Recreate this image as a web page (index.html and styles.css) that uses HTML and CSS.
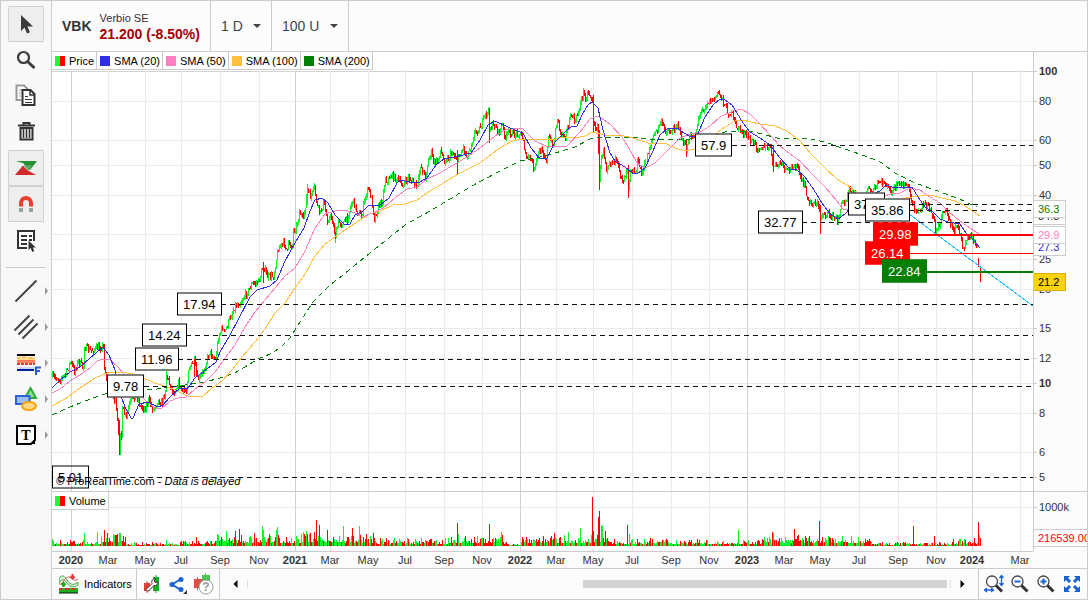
FILE: index.html
```html
<!DOCTYPE html>
<html lang="en">
<head>
    <meta charset="UTF-8">
    <meta name="viewport" content="width=device-width, initial-scale=1.0">
    <title>VBK - Verbio SE</title>
    <link rel="stylesheet" href="styles.css">
</head>
<body>
    <div class="app">
        <nav class="sidebar" aria-label="Drawing tools">
            <button type="button" class="tool active" aria-label="Pointer">
                <svg width="22" height="22" viewBox="0 0 22 22"><path d="M6 2v16l3.500-3.500 2.500 6 3-1.300-2.600-5.700H18z" fill="#3c3c3c"/></svg>
            </button>
            <button type="button" class="tool" aria-label="Zoom">
                <svg width="22" height="22" viewBox="0 0 22 22"><circle cx="8.500" cy="8.500" r="5.500" fill="none" stroke="#3c3c3c" stroke-width="2.200"/><path d="M12.500 12.500l7 6.500" stroke="#3c3c3c" stroke-width="3"/></svg>
            </button>
            <button type="button" class="tool" aria-label="Copy">
                <svg width="22" height="22" viewBox="0 0 22 22"><path d="M6 15H1.500V.5H9l4 4" fill="#fff" stroke="#999" stroke-width="2"/><path d="M4 5h3M4 8h2M4 11h2" stroke="#999"/><path d="M7.500 5h8l4 4v11h-12z" fill="#fff" stroke="#333" stroke-width="2"/><path d="M15 5v5h5" fill="none" stroke="#333" stroke-width="1.500"/><path d="M10 11.500h3M10 14.500h7M10 17.500h7" stroke="#333"/></svg>
            </button>
            <button type="button" class="tool" aria-label="Delete">
                <svg width="22" height="22" viewBox="0 0 22 22"><path d="M3 4.500h17M8.500 4V2h6v2" fill="none" stroke="#333" stroke-width="2"/><path d="M5.500 7v11.500h12V7z" fill="#eee" stroke="#333" stroke-width="2"/><path d="M8.500 8v9M11.500 8v9M14.500 8v9" stroke="#333" stroke-width="1.500"/></svg>
            </button>
            <button type="button" class="tool active" aria-label="Order">
                <svg width="24" height="22" viewBox="0 0 24 22"><path d="M2 4h21l-7 9-5-3.500-1-3z" fill="#269034"/><path d="M1 18l8-9.500 4 4.500 9 5z" fill="#d22a2a"/><path d="M10 8l4 6 4-5.500z" fill="#5fae62"/></svg>
            </button>
            <button type="button" class="tool active" aria-label="Magnet">
                <svg width="22" height="22" viewBox="0 0 22 22"><path d="M6 13.500V10a5 5 0 0 1 10 0v3.500" fill="none" stroke="#e8402f" stroke-width="4"/><path d="M4 15h4v4H4zM14 15h4v4h-4z" fill="#95a5a6"/></svg>
            </button>
            <button type="button" class="tool" aria-label="Object list">
                <svg width="22" height="24" viewBox="0 0 22 24"><path d="M12 20H3V3h16v10" fill="#fff" stroke="#333" stroke-width="2"/><path d="M6 8h6M6 12h6M6 16h6M14 8h3M14 12h3" stroke="#333" stroke-width="2"/><path d="M13.500 12.500v9.500l2.200-2 1.600 4 2-1-1.500-3.500h3z" fill="#333"/></svg>
            </button>
            <hr class="divider">
            <button type="button" class="tool more" aria-label="Line">
                <svg width="24" height="24" viewBox="0 0 24 24"><path d="M1.500 22.500l21-21" stroke="#444" stroke-width="2"/></svg>
            </button>
            <button type="button" class="tool more" aria-label="Parallel lines">
                <svg width="24" height="24" viewBox="0 0 24 24"><path d="M.5 15.500l15-15M4.500 19.500l15-15M8.500 23.500l15-15" stroke="#444" stroke-width="2"/></svg>
            </button>
            <button type="button" class="tool more" aria-label="Fibonacci">
                <svg width="26" height="22" viewBox="0 0 26 22"><path d="M4 3h18" stroke="#000" stroke-width="2"/><path d="M4 5h18v3H4z" fill="#ffd98c"/><path d="M4 6h3M9 5h4M15 6h5" stroke="#ff9d2e"/><path d="M4 8h18v3H4z" fill="#ff8058"/><path d="M4 12h18" stroke="#e33" stroke-width="2" stroke-dasharray="3 1"/><path d="M4 15h18v3H4z" fill="#c7dcf5"/><path d="M4 18h17" stroke="#001e9c" stroke-width="2"/><path d="M23 23v-7.500h5M23 19h4" fill="none" stroke="#2a5cc8" stroke-width="2"/></svg>
            </button>
            <button type="button" class="tool more" aria-label="Shapes">
                <svg width="24" height="26" viewBox="0 0 24 26"><path d="M16.500 2l5.500 10H11z" fill="#8fdc92" stroke="#29b034" stroke-width="2"/><path d="M2 10h13.500v8H2z" fill="#9bbdf0" stroke="#2b62d0" stroke-width="2"/><ellipse cx="15" cy="20" rx="7" ry="4" fill="#ffd883" stroke="#f5a312" stroke-width="2"/></svg>
            </button>
            <button type="button" class="tool more" aria-label="Text">
                <svg width="22" height="22" viewBox="0 0 22 22"><path d="M2 2h18v14l-4 4H2z" fill="#fff" stroke="#000" stroke-width="2"/><path d="M20 16v4h-4z"/><text x="11" y="16" class="text-glyph">T</text></svg>
            </button>
        </nav>

        <main class="content">
            <header class="topbar">
                <div class="instrument">
                    <strong class="symbol">VBK</strong>
                    <div class="details">
                        <div class="name">Verbio SE</div>
                        <div class="quote">21.200 (-8.50%)</div>
                    </div>
                </div>
                <label class="picker">
                    <select class="timeframe" aria-label="Timeframe"><option>1 D</option><option>4 H</option></select>
                </label>
                <label class="picker">
                    <select class="units" aria-label="Units"><option>100 U</option><option>200 U</option></select>
                </label>
            </header>

            <section class="pane price-pane">
                <div class="plot">
                    <svg id="priceChart" viewBox="52 52 981 439" preserveAspectRatio="none"></svg>
                    <ul class="legend">
                        <li><span class="swatch updown"></span>Price</li>
                        <li><span class="swatch sma20"></span>SMA (20)</li>
                        <li><span class="swatch sma50"></span>SMA (50)</li>
                        <li><span class="swatch sma100"></span>SMA (100)</li>
                        <li><span class="swatch sma200"></span>SMA (200)</li>
                    </ul>
                    <div id="levels"></div>
                    <p class="copyright">© ProRealTime.com - <em>Data is delayed</em></p>
                </div>
                <div class="scale" id="priceScale"></div>
            </section>

            <section class="pane volume-pane">
                <div class="plot">
                    <svg id="volumeChart" viewBox="52 492 981 59" preserveAspectRatio="none"></svg>
                    <ul class="legend">
                        <li><span class="swatch updown"></span>Volume</li>
                    </ul>
                </div>
                <div class="scale">
                    <span class="tick volume-tick">1000k</span>
                    <span class="volume-value">216539.00</span>
                </div>
            </section>

            <div class="pane time-pane">
                <div class="time-axis" id="timeAxis"></div>
                <div class="corner"></div>
            </div>

            <footer class="bottombar">
                <button type="button" class="indicators">
                    <svg width="20" height="20" viewBox="0 0 20 20"><path d="M0 5c3-6 6-2 8 1s5 7 11 2v3c-6 4-9 1-11-2S3 4 0 9z" fill="#d8f0d8" stroke="#45a545"/><path d="M0 10c4 1 5-7 10-7 4 0 5 6 9 2" fill="none" stroke="#d9534f"/><path d="M13.500 0v4M11.500 2.500l2 2 2-2" fill="none" stroke="#e33" stroke-width="2"/><path d="M4.500 13V9M2.500 11l2-2 2 2" fill="none" stroke="#1a1" stroke-width="2"/><path d="M0 14h19v5H0z" fill="#1cae1c"/><path d="M0 14h3v2H0zM6 14h4v2H6zM13 14h3v2h-3z" fill="#d33"/><path d="M0 19h19" stroke="#111"/></svg>
                    Indicators
                </button>
                <div class="actions">
                    <button type="button" aria-label="Settings">
                        <svg width="18" height="20" viewBox="0 0 18 20"><path d="M1 9h6v8H1z" fill="#e33e35"/><path d="M4 7v12" stroke="#e33e35"/><path d="M10 3h6v14h-6z" fill="#19ad25"/><path d="M13 1v18" stroke="#19ad25"/><path d="M3 15.500l6-6c-1-3 1-5 3.500-4.500L11 7l2 2 2-1.500c.5 3-2 4.500-4 4l-6 6z" fill="#fff" stroke="#333"/></svg>
                    </button>
                    <button type="button" aria-label="Share">
                        <svg width="20" height="20" viewBox="0 0 20 20"><path d="M14 5L5 10.500l9 5.500" fill="none" stroke="#1b60d2" stroke-width="2"/><circle cx="14" cy="5.500" r="2.500" fill="#1b60d2"/><circle cx="5" cy="10.500" r="2.500" fill="#1b60d2"/><circle cx="14" cy="15.500" r="2.500" fill="#1b60d2"/><path d="M20 16v4h-4z" fill="#333"/></svg>
                    </button>
                    <button type="button" aria-label="Help">
                        <svg width="22" height="22" viewBox="0 0 22 22"><path d="M1 6h8v9H1z" fill="#e64c45"/><path d="M4.500 4v13" stroke="#e64c45"/><path d="M9 2h8v6H9z" fill="#4cc552"/><path d="M12.500 0v8" stroke="#4cc552"/><circle cx="13" cy="14" r="7" fill="#fff" stroke="#999"/><text x="13" y="18" class="help-glyph">?</text></svg>
                    </button>
                </div>
                <div class="scroller">
                    <button type="button" aria-label="Scroll left"><svg width="5" height="8" viewBox="0 0 5 8"><path d="M4.500 0v8L.5 4z"/></svg></button>
                    <input type="range" min="0" max="100" value="99" aria-label="Chart position">
                    <button type="button" aria-label="Scroll right"><svg width="5" height="8" viewBox="0 0 5 8"><path d="M.5 0v8l4-4z"/></svg></button>
                </div>
                <div class="zoom">
                    <button type="button" aria-label="Reset zoom">
                        <svg width="20" height="20" viewBox="0 0 20 20"><circle cx="8" cy="7.500" r="5.500" fill="#fff" stroke="#444" stroke-width="1.300"/><path d="M12 11.500l6 6" stroke="#333" stroke-width="3"/><path d="M17.500 2v9M15.500 4l2-2.500 2 2.500M15.500 9l2 2.500 2-2.500M1 16h8M3 14l-2.500 2L3 18M7 14l2.500 2L7 18" fill="none" stroke="#1b60d2" stroke-width="1.300"/></svg>
                    </button>
                    <button type="button" aria-label="Zoom out">
                        <svg width="20" height="20" viewBox="0 0 20 20"><circle cx="7.500" cy="7.500" r="5.500" fill="#fff" stroke="#444" stroke-width="1.300"/><path d="M11.500 11.500l6 6" stroke="#333" stroke-width="3"/><path d="M4.500 7.500h6" stroke="#1b60d2" stroke-width="2"/></svg>
                    </button>
                    <button type="button" aria-label="Zoom in">
                        <svg width="20" height="20" viewBox="0 0 20 20"><circle cx="7.500" cy="7.500" r="5.500" fill="#fff" stroke="#444" stroke-width="1.300"/><path d="M11.500 11.500l6 6" stroke="#333" stroke-width="3"/><path d="M4.500 7.500h6M7.500 4.500v6" stroke="#1b60d2" stroke-width="2"/></svg>
                    </button>
                    <button type="button" aria-label="Full screen">
                        <svg width="20" height="20" viewBox="0 0 20 20"><path d="M3 3l5 5M17 3l-5 5M3 17l5-5M17 17l-5-5" stroke="#1b60d2" stroke-width="3"/><path d="M2 2h6L2 8zM18 2h-6l6 6zM2 18h6l-6-6zM18 18h-6l6-6z" fill="#1b60d2"/></svg>
                    </button>
                </div>
            </footer>
        </main>
    </div>
    <script src="chart.js"></script>
</body>
</html>
```

FILE: styles.css
```css
* {
    box-sizing: border-box;
}
body {
    margin: 0;
    font-family: "Liberation Sans", Arial, sans-serif;
    font-size: 11px;
    color: #333;
}
button {
    display: flex;
    align-items: center;
    justify-content: center;
    padding: 0;
    border: none;
    background: none;
    font: inherit;
    cursor: pointer;
}
.app {
    display: flex;
    height: 100vh;
    min-height: 480px;
    border: 1px solid #ccc;
    background-color: #fcfcfc;
}

/* Drawing tools */
.sidebar {
    flex: none;
    width: 51px;
    padding: 5px 7px;
    border-right: 1px solid #ccc;
    background-color: #f8f8f8;
}
.tool {
    position: relative;
    width: 36px;
    height: 36px;
    border: 1px solid transparent;
    border-radius: 1px;
}
.tool.active {
    border-color: #d0d0d0;
    background-color: #eee;
}
.tool svg {
    overflow: visible;
}
.more::after {
    content: "";
    position: absolute;
    right: -5px;
    top: 13px;
    border: 4px solid transparent;
    border-left: 3px solid #999;
    border-right: none;
}
.divider {
    height: 1px;
    margin: 9px -2px 5px;
    border: none;
    background-color: #ccc;
}
.text-glyph {
    font: bold 14px "Liberation Serif", serif;
    text-anchor: middle;
}

.content {
    flex: 1;
    min-width: 0;
    display: flex;
    flex-direction: column;
}

/* Top bar */
.topbar {
    flex: none;
    display: flex;
    height: 51px;
    border-bottom: 1px solid #ccc;
}
.instrument {
    display: flex;
    align-items: center;
    gap: 8px;
    padding: 0 10px;
    border-right: 1px solid #ccc;
}
.symbol {
    font-size: 14px;
}
.details {
    padding-top: 2px;
}
.name {
    line-height: 14px;
}
.quote {
    font-size: 14px;
    font-weight: bold;
    line-height: 18px;
    color: #a50000;
}
.picker {
    position: relative;
    display: flex;
    border-right: 1px solid #ccc;
}
.picker::after {
    content: "";
    position: absolute;
    right: 10px;
    top: 23px;
    border: 4px solid transparent;
    border-top-color: #444;
    border-bottom: none;
}
.picker select {
    appearance: none;
    padding: 0 28px 0 10px;
    border: none;
    background: none;
    font: 14px "Liberation Sans", Arial, sans-serif;
    color: #444;
}

/* Chart panes */
.pane {
    flex: none;
    display: flex;
}
.price-pane {
    flex: 1;
    min-height: 0;
}
.volume-pane {
    height: 60px;
    border-top: 1px solid #ccc;
}
.plot {
    position: relative;
    flex: 1;
    min-width: 0;
    overflow: hidden;
    background-color: #fff;
}
.plot > svg {
    display: block;
    width: 100%;
    height: 100%;
}
.scale,
.corner {
    position: relative;
    flex: none;
    width: 54px;
}
.scale {
    border-left: 1px solid #ccc;
    overflow: hidden;
}
.legend {
    position: absolute;
    left: 0;
    top: 0;
    display: flex;
    margin: 0;
    padding: 0;
    list-style: none;
    background-color: #fff;
    color: #000;
}
.legend li {
    display: flex;
    align-items: center;
    gap: 4px;
    height: 18px;
    padding: 0 2px 0 3px;
    border-right: 1px solid #ccc;
    border-bottom: 1px solid #ccc;
}
.swatch {
    width: 10px;
    height: 10px;
}
.updown {
    background: linear-gradient(90deg, #14ff32 50%, #f00 50%);
}
.sma20 { background-color: #3030e0; }
.sma50 { background-color: #ff80c0; }
.sma100 { background-color: #ffc040; }
.sma200 { background-color: #008000; }

/* Lines and bars */
.grid, .candle, .level, .bar, .average {
    fill: none;
    stroke-width: 1px;
    vector-effect: non-scaling-stroke;
    shape-rendering: crispEdges;
}
.grid { stroke: #ebebeb; }
.grid.major { stroke: #d2d2d2; }
.candle.up, .bar.up { stroke: #0df52a; }
.candle.down, .bar.down { stroke: #f00; }
.level { stroke: #111; stroke-dasharray: 5 4; }
.level.red { stroke: #f00; stroke-dasharray: none; }
.level.green { stroke: #008000; stroke-dasharray: none; }
.level.thick { stroke-width: 2px; }
.average.a20 { stroke: #3030e0; }
.average.a50 { stroke: #ff80c0; }
.average.a100 { stroke: #ffc040; }
.average.a200 { stroke: #008000; stroke-dasharray: 5 4; }
.average.trend { stroke: #2fbdf8; }

.level-tag {
    position: absolute;
    height: 23px;
    padding: 0 5px;
    border: 1px solid #000;
    background-color: #fff;
    color: #000;
    font-size: 13px;
    line-height: 21px;
    transform: translateY(-50%);
}
.level-tag.red {
    border-color: #f00;
    background-color: #f00;
    color: #fff;
}
.level-tag.green {
    border-color: #008000;
    background-color: #008000;
    color: #fff;
}
.level-tag.clear {
    background: none;
}
.copyright {
    position: absolute;
    left: 4px;
    bottom: 3px;
    margin: 0;
    line-height: 13px;
    color: #000;
}

/* Scales */
.tick {
    position: absolute;
    left: 5px;
    line-height: 14px;
    transform: translateY(-50%);
}
.tick::before {
    content: "";
    position: absolute;
    left: -5px;
    top: 7px;
    width: 3px;
    height: 1px;
    background-color: #ccc;
}
.tick.major {
    font-weight: bold;
}
.volume-tick {
    top: 15px;
}
.value-tag {
    position: absolute;
    left: 0;
    width: 32px;
    height: 18px;
    padding-left: 4px;
    border: 1px solid #ccc;
    border-left: none;
    background-color: #fff;
    line-height: 16px;
    transform: translateY(-50%);
}
.value-tag.v20 { color: #2a2ad8; }
.value-tag.v50 { color: #ff80c0; }
.value-tag.v200 { color: #008000; }
.value-tag.last {
    border-color: #e0ac00;
    background-color: #fad20f;
    color: #000;
}
.volume-value {
    position: absolute;
    left: 0;
    right: 0;
    top: 37px;
    padding-left: 4px;
    border: 1px solid #ccc;
    border-width: 1px 0;
    background-color: #fff;
    line-height: 16px;
    color: #f00;
}
.time-pane {
    height: 17px;
}
.time-axis {
    position: relative;
    flex: 1;
    border-top: 1px solid #ccc;
}
.time-axis span {
    position: absolute;
    top: 1px;
    line-height: 14px;
    transform: translateX(-50%);
}
.time-axis .major {
    font-weight: bold;
}

/* Bottom bar */
.bottombar {
    flex: none;
    display: flex;
    height: 31px;
    border-top: 1px solid #ccc;
}
.indicators {
    gap: 5px;
    padding: 0 4px 0 7px;
    border-right: 1px solid #ccc;
    color: #000;
}
.actions,
.zoom {
    display: flex;
    align-items: center;
    gap: 6px;
    padding: 0 4px 0 6px;
    border-right: 1px solid #ccc;
}
.zoom {
    padding: 0 5px;
    border-right: none;
    border-left: 1px solid #ccc;
}
.scroller {
    flex: 1;
    display: flex;
    align-items: center;
    gap: 9px;
    padding: 0 13px;
}
.scroller input {
    flex: 1;
    min-width: 0;
    height: 8px;
    margin: 0;
    appearance: none;
    background: none;
    border: 1px solid #ddd;
    border-width: 0 1px;
}
.scroller input::-webkit-slider-thumb {
    appearance: none;
    width: 364px;
    height: 8px;
    background-color: #d4d4d4;
}
.help-glyph {
    font: bold 12px "Liberation Sans", Arial, sans-serif;
    text-anchor: middle;
    fill: #999;
}
```

FILE: chart.js
```js
const LEFT = 52, TOP = 52, WIDTH = 981, HEIGHT = 439, RIGHT = LEFT + WIDTH;
const priceChart = document.getElementById('priceChart');
const volumeChart = document.getElementById('volumeChart');

const months = [
    [71, '2020'], [108, 'Mar'], [145, 'May'], [181, 'Jul'], [220, 'Sep'], [259, 'Nov'],
    [295, '2021'], [330, 'Mar'], [368, 'May'], [405, 'Jul'], [444, 'Sep'], [482, 'Nov'],
    [520, '2022'], [556, 'Mar'], [593, 'May'], [632, 'Jul'], [671, 'Sep'], [709, 'Nov'],
    [747, '2023'], [784, 'Mar'], [820, 'May'], [859, 'Jul'], [898, 'Sep'], [936, 'Nov'],
    [972, '2024'], [1020, 'Mar']
];
const prices = [100, 80, 60, 50, 40, 30, 25, 20, 15, 12, 10, 8, 6, 5];

// [price, tag x, line start x, classes]
const levels = [
    [57.9, 695, 732, ''], [32.77, 758, 802, ''], [37.5, 848, 892, ''], [35.86, 865, 909, ''],
    [29.98, 873, 917, 'red thick'], [26.14, 865, 909, 'red'], [22.84, 882, 926, 'green thick'],
    [17.94, 177, 221, ''], [14.24, 142, 186, ''], [11.96, 135, 178, ''], [9.78, 107, 144, ''],
    [5.01, 52, 58, 'clear']
];

const close = '52,377 60,379 65,375 70,362 74,371 78,361 82,367 83,366 84,347 90,351 97,348 103,346 104,366 106,379 112,395 115,402 117,422 118,436 119,450 120,430 121,437 122,410 126,418 128,407 133,397 137,397 140,407 145,408 148,400 153,410 157,400 162,403 165,390 166,375 169,383 173,393 178,383 182,392 186,391 188,368 194,362 197,380 200,378 204,368 209,352 215,360 218,337 222,327 224,333 230,317 234,307 240,302 247,292 252,284 258,282 263,266 267,277 273,276 278,248 284,243 287,252 288,243 292,245 293,230 296,227 299,212 303,220 307,190 310,197 314,188 317,207 320,213 323,202 327,220 331,217 335,236 338,223 343,223 347,218 352,200 356,210 361,217 365,197 368,188 372,203 374,218 378,207 382,200 385,177 387,183 390,175 397,180 403,185 408,177 413,183 417,187 420,165 425,177 428,160 431,152 433,162 437,162 440,150 443,160 448,158 452,152 457,160 463,147 466,157 470,147 474,133 480,127 485,115 488,112 489,128 495,125 498,133 502,125 505,138 509,131 513,135 518,133 523,138 525,157 530,158 534,170 538,153 542,150 546,160 548,138 553,145 557,117 560,133 565,135 571,115 575,122 579,107 583,92 585,98 588,92 592,100 593,125 597,128 599,180 601,158 603,148 606,168 608,163 615,160 619,172 623,180 627,167 628,185 630,168 635,173 637,162 642,173 647,155 652,138 657,130 660,122 665,130 672,132 677,122 680,135 683,142 686,150 689,138 695,135 698,118 702,110 707,102 713,100 718,93 722,98 725,107 728,113 732,115 735,125 740,130 748,138 757,147 770,148 773,168 780,163 787,172 793,165 798,168 800,180 805,187 808,203 817,203 820,218 823,213 830,215 837,220 842,203 845,200 849,187 852,193 860,200 868,190 873,192 878,182 885,183 890,193 897,185 907,185 909,193 914,210 918,212 923,203 928,207 933,217 935,230 939,223 944,210 948,217 953,230 958,227 963,250 966,240 970,235 975,242 977,247';
const averages = {
    a200: '52,415 70,407 85,401 105,394 120,391 145,390 157,389 170,387 185,385 205,382 220,378 235,373 245,367 258,359 270,354 280,348 290,338 300,322 313,302 330,285 343,275 370,253 395,233 405,225 430,211 450,199 470,187 485,179 500,171 520,161 540,157 552,154 575,147 590,139 600,137 630,137 650,139 680,140 700,138 715,134 730,131 750,131 762,134 777,138 810,139 825,142 845,149 868,157 882,163 895,173 915,183 935,190 957,198 977,207',
    a100: '52,406 65,399 80,388 95,378 107,373 120,372 133,374 145,379 158,384 173,389 183,394 190,397 203,396 212,388 222,381 232,370 242,357 255,342 265,329 275,313 285,303 295,288 305,274 315,256 325,244 335,237 345,230 360,220 370,214 380,211 393,205 405,204 417,200 430,191 445,182 460,173 480,163 497,150 510,142 520,139 555,139 562,137 575,138 585,136 592,132 605,135 620,135 633,138 648,143 665,143 675,148 685,151 695,149 710,138 725,127 735,121 742,120 760,124 775,126 787,131 800,141 812,155 825,168 837,179 850,187 862,196 875,200 890,202 905,198 920,196 930,195 942,198 955,201 965,206 980,216',
    a50: '52,393 60,389 70,381 80,375 90,368 97,361 103,359 110,360 117,366 124,374 135,387 145,400 155,408 161,409 170,401 178,398 186,397 195,389 205,382 215,372 225,358 235,345 245,327 255,312 265,300 275,288 285,276 295,268 305,251 315,228 325,214 335,211 345,210 355,213 362,217 373,213 383,208 395,198 407,189 417,187 427,179 440,173 455,164 470,155 480,148 495,136 505,130 515,128 523,129 535,141 548,147 567,146 580,132 590,119 598,116 610,124 622,137 630,150 637,163 645,168 655,163 665,153 680,138 690,134 700,132 710,126 720,117 733,111 741,109 750,114 760,124 770,135 780,146 790,154 800,161 813,175 825,187 837,201 843,209 850,209 860,207 875,200 890,194 900,193 910,188 920,190 930,197 940,203 950,213 960,221 970,228 979,234',
    a20: '52,388 60,380 70,372 80,367 90,358 103,347 109,355 115,370 120,393 125,407 131,418 133,418 139,404 148,402 158,407 163,405 170,397 180,388 187,389 195,378 207,369 216,362 220,352 230,335 238,320 250,297 257,290 270,286 277,280 285,261 295,243 304,228 310,211 315,200 322,198 328,203 335,215 345,225 350,224 355,215 363,211 369,205 380,205 389,198 397,183 401,180 409,182 418,183 427,178 436,165 444,159 454,157 463,155 471,153 480,140 488,125 495,121 510,128 523,133 531,148 540,159 547,158 555,142 565,132 572,126 577,126 583,113 588,105 592,102 598,108 603,130 610,153 615,161 625,167 632,173 637,174 645,168 652,153 660,135 668,128 677,128 684,133 691,137 697,136 705,117 713,105 720,99 725,100 732,105 737,113 743,123 750,132 760,138 770,145 780,158 790,169 797,170 805,177 814,190 822,203 830,214 838,219 845,214 852,206 860,202 868,196 880,191 886,185 892,187 900,188 912,187 918,197 925,207 933,212 940,219 948,222 960,224 966,233 975,242 980,248'
};
// extra long candles: [x, top, bottom, direction]
const wicks = [
    [119, 420, 453, 'down'], [166, 371, 390, 'up'], [194, 359, 377, 'down'], [263, 262, 283, 'down'],
    [307, 184, 205, 'up'], [335, 226, 243, 'up'], [457, 150, 174, 'down'], [489, 122, 143, 'down'],
    [593, 95, 133, 'down'], [599, 130, 190, 'down'], [628, 165, 198, 'down'], [686, 140, 157, 'down'],
    [773, 145, 172, 'down'], [820, 205, 234, 'down'], [978, 258, 267, 'down'], [980, 267, 282, 'down']
];
// typical bar height up to each x
const volumeBase = [[100, 3], [125, 7], [180, 2], [215, 3], [300, 6], [340, 7], [375, 6], [450, 4], [500, 5], [520, 2], [610, 6], [700, 4], [760, 3], [870, 5], [950, 2], [981, 4]];
const volumePeaks = [
    [52, 7, 1], [84, 13, 1], [97, 14, 1], [104, 16, 0], [107, 13, 0], [117, 12, 0], [166, 6, 1], [196, 9, 0],
    [217, 12, 1], [226, 15, 1], [235, 15, 0], [239, 17, 0], [254, 13, 0], [262, 20, 1], [263, 16, 1],
    [276, 16, 1], [277, 19, 1], [306, 15, 1], [316, 26, 0], [319, 21, 0], [327, 16, 0], [343, 20, 1],
    [352, 18, 0], [359, 20, 1], [373, 13, 0], [457, 23, 0], [458, 12, 1], [489, 22, 0], [501, 14, 1],
    [502, 11, 0], [554, 13, 0], [568, 14, 1], [580, 18, 1], [592, 49, 0], [593, 15, 0], [598, 29, 0],
    [599, 35, 0], [601, 20, 1], [602, 21, 1], [605, 15, 0], [627, 21, 0], [629, 12, 1], [738, 16, 1],
    [772, 14, 0], [773, 13, 1], [794, 17, 0], [798, 11, 0], [819, 25, 0], [842, 10, 1], [913, 20, 0],
    [934, 10, 0], [978, 24, 0], [979, 11, 1], [980, 8, 0]
];

// logarithmic price scale
function priceY(price) {
    return 71.5 + 312 * (2 - Math.log10(price));
}

let seed = 7;
function random() {
    seed = (seed * 16807) % 2147483647;
    return seed / 2147483647;
}

function addPath(svg, d, className) {
    const path = document.createElementNS('http://www.w3.org/2000/svg', 'path');
    path.setAttribute('d', d);
    path.setAttribute('class', className);
    svg.appendChild(path);
}

function addLabel(parent, text, className, style) {
    const span = document.createElement('span');
    span.textContent = text;
    span.className = className;
    Object.assign(span.style, style);
    parent.appendChild(span);
}

function percentY(y) {
    return (y - TOP) / HEIGHT * 100 + '%';
}

function percentX(x) {
    return (x - LEFT) / WIDTH * 100 + '%';
}

function drawGrid() {
    prices.forEach(function(price) {
        const y = Math.floor(priceY(price));
        addPath(priceChart, `M${LEFT} ${y + 0.5}H${RIGHT}`, price === 100 ? 'grid major' : 'grid');
        addLabel(document.getElementById('priceScale'), price, price % 90 === 10 ? 'tick major' : 'tick', { top: percentY(y) });
    });
    addPath(volumeChart, `M${LEFT} 507.5H${RIGHT}`, 'grid');
    months.forEach(function([x, text]) {
        const year = text.startsWith('20');
        const className = year ? 'grid major' : 'grid';
        addPath(priceChart, `M${x + 0.5} 71V491`, className);
        addPath(volumeChart, `M${x + 0.5} 492V551`, className);
        addLabel(document.getElementById('timeAxis'), text, year ? 'major' : '', { left: percentX(x) });
    });
}

function drawCandles() {
    const points = close.split(' ').map(p => p.split(',').map(Number));
    const paths = { up: '', down: '' };
    let previous = points[0][1];
    let i = 0;
    for (let x = LEFT; x <= 977; x++) {
        while (points[i + 1] && points[i + 1][0] < x) i++;
        const [x1, y1] = points[i];
        const [x2, y2] = points[i + 1] || points[i];
        const base = x2 > x1 ? y1 + (y2 - y1) * (x - x1) / (x2 - x1) : y1;
        const y = base + (random() - 0.5) * 7;
        const top = Math.round(Math.min(previous, y) - random() * 3);
        const bottom = Math.round(Math.max(previous, y) + random() * 3);
        paths[y < previous ? 'up' : 'down'] += `M${x + 0.5} ${top}V${bottom}`;
        previous = y;
    }
    wicks.forEach(([x, top, bottom, side]) => paths[side] += `M${x + 0.5} ${top}V${bottom}`);
    addPath(priceChart, paths.up, 'candle up');
    addPath(priceChart, paths.down, 'candle down');
}

function drawLevels() {
    levels.forEach(function([price, x, lineX, className]) {
        const y = Math.floor(priceY(price));
        const lineY = className.includes('thick') ? y + 1 : y + 0.5;
        addPath(priceChart, `M${lineX} ${lineY}H${RIGHT}`, 'level ' + className);
        addLabel(document.getElementById('levels'), price, 'level-tag ' + className, { left: percentX(x), top: percentY(y) });
    });
}

function drawVolume() {
    const paths = { up: '', down: '' };
    for (let x = LEFT; x <= 980; x++) {
        const base = volumeBase.find(b => x <= b[0])[1];
        const peak = volumePeaks.find(p => p[0] === x);
        const r = random();
        const height = peak ? peak[1] : Math.max(1, Math.round(base * (0.5 + r * r * 1.5)));
        const up = peak ? peak[2] : random() > 0.5;
        paths[up ? 'up' : 'down'] += `M${x + 0.5} 546V${546 - height}`;
    }
    addPath(volumeChart, paths.up, 'bar up');
    addPath(volumeChart, paths.down, 'bar down');
}

drawGrid();
drawCandles();
Object.keys(averages).forEach(name => addPath(priceChart, 'M' + averages[name].replaceAll(' ', 'L'), 'average ' + name));
addPath(priceChart, 'M909 214L1033 306', 'average trend');
drawLevels();
drawVolume();

// current values, nearest on top
const scale = document.getElementById('priceScale');
addLabel(scale, '34.3', 'value-tag', { top: percentY(216) });
addLabel(scale, '36.3', 'value-tag v200', { top: percentY(209) });
addLabel(scale, '27.3', 'value-tag v20', { top: percentY(247) });
addLabel(scale, '29.9', 'value-tag v50', { top: percentY(235) });
addLabel(scale, '21.2', 'value-tag last', { top: percentY(282) });
```
